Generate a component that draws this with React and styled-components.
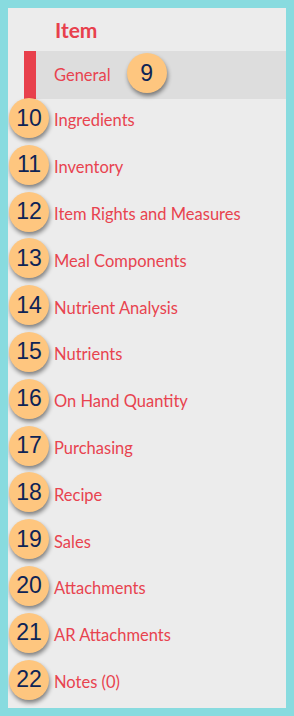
import styled, { createGlobalStyle } from "styled-components";

const GlobalStyle = createGlobalStyle`
    html, body {
        margin: 0;
        padding: 0;
        background-color: #88dbdf;
    }
`;

const items = [
    { label: "Ingredients", badge: 10 },
    { label: "Inventory", badge: 11 },
    { label: "Item Rights and Measures", badge: 12 },
    { label: "Meal Components", badge: 13 },
    { label: "Nutrient Analysis", badge: 14 },
    { label: "Nutrients", badge: 15 },
    { label: "On Hand Quantity", badge: 16 },
    { label: "Purchasing", badge: 17 },
    { label: "Recipe", badge: 18 },
    { label: "Sales", badge: 19 },
    { label: "Attachments", badge: 20 },
    { label: "AR Attachments", badge: 21 },
    { label: "Notes (0)", badge: 22 },
];

export default function App() {
    return (
        <>
            <GlobalStyle />
            <Panel>
                <Header>Item</Header>
                <ActiveRow>
                    <ActiveLabel>General</ActiveLabel>
                    <InlineBadge>9</InlineBadge>
                </ActiveRow>
                {items.map((item) => (
                    <Row key={item.label}>
                        <Badge>{item.badge}</Badge>
                        <Label>{item.label}</Label>
                    </Row>
                ))}
            </Panel>
        </>
    );
}

const Panel = styled.div`
    margin: 8px;
    height: 700px;
    background-color: #ececec;
    overflow: hidden;
    font-family: Lato, "Liberation Sans", sans-serif;
`;

const Header = styled.div`
    height: 43px;
    display: flex;
    align-items: center;
    padding-left: 47px;
    box-sizing: border-box;
    font-size: 21px;
    font-weight: bold;
    color: #e8404c;
`;

const ActiveRow = styled.div`
    height: 48px;
    margin-left: 16px;
    border-left: 12px solid #e8404c;
    background-color: #dddddd;
    display: flex;
    align-items: center;
    padding-left: 18px;
`;

const ActiveLabel = styled.span`
    font-size: 16.5px;
    color: #e8434f;
    margin-top: -1px;
`;

const Row = styled.div`
    position: relative;
    height: 46.8px;
    display: flex;
    align-items: center;
    padding-left: 46px;
`;

const Label = styled.span`
    font-size: 16.5px;
    color: #e8434f;
    margin-top: -4px;
`;

const Badge = styled.div`
    position: absolute;
    left: 1px;
    top: -1px;
    width: 40px;
    height: 40px;
    border-radius: 50%;
    background-color: #fec67f;
    box-shadow: 1px 3px 4px rgba(0, 0, 0, 0.45);
    display: flex;
    align-items: center;
    justify-content: center;
    font-family: "Liberation Sans", Arial, sans-serif;
    font-size: 23px;
    color: #0e2456;
    z-index: 1;
`;

const InlineBadge = styled(Badge)`
    position: static;
    margin-left: 16px;
    margin-top: -4px;
`;
